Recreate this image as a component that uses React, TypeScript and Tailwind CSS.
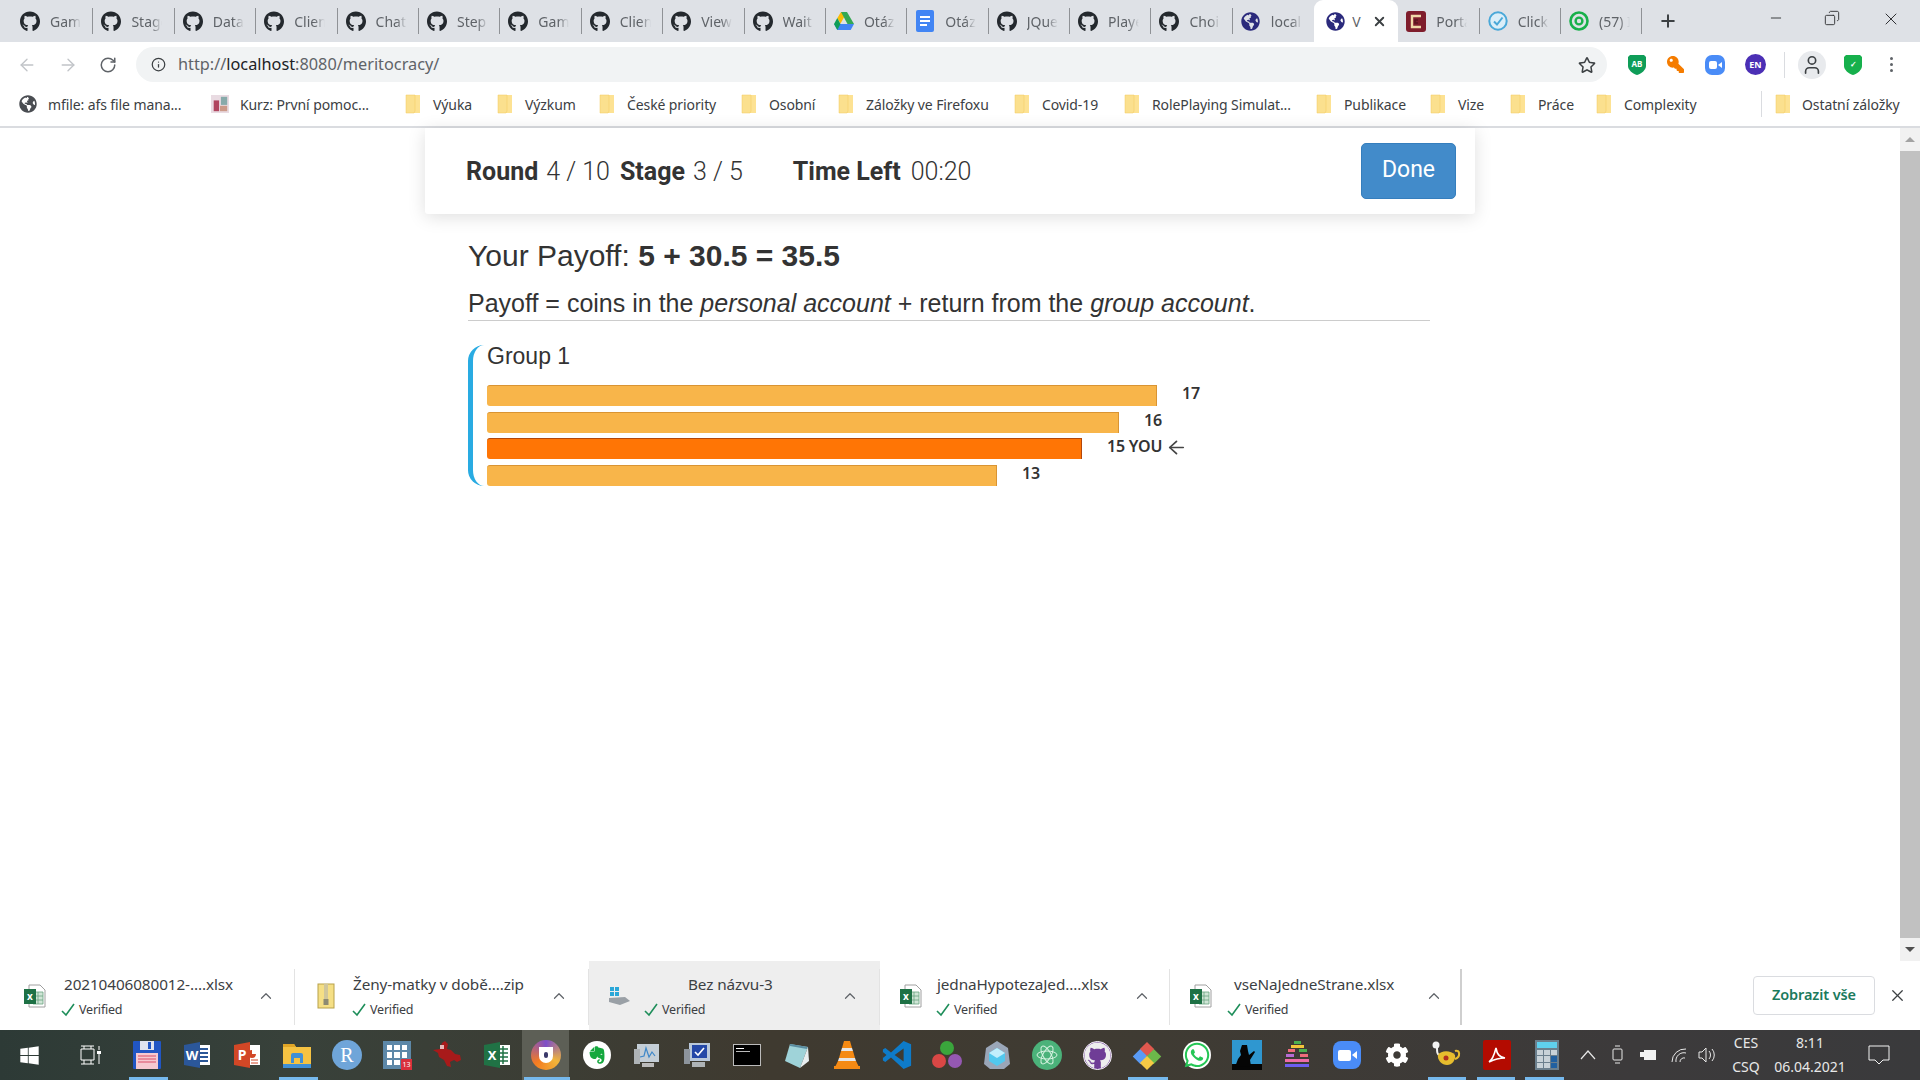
import React from "react";
import { FaGithub, FaWindows, FaEvernote, FaWhatsapp, FaCog, FaGlobeAmericas, FaRegStar, FaKey } from "react-icons/fa";
import { ArrowLeft, ArrowRight, RotateCw, Info, User, ChevronUp, Plus, Minus, X, Copy } from "lucide-react";

const Folder = () => (
  <svg width="16" height="20" viewBox="0 0 16 20" className="shrink-0">
    <path d="M1 1h9l5 0v18H1z" fill="#fde293" />
    <path d="M1 1h9v16l-1 2H1z" fill="#fbe08e" stroke="#f0c95f" strokeWidth="0.5" />
  </svg>
);

const Docs = () => (
  <svg width="18" height="22" viewBox="0 0 18 22">
    <rect x="0" y="0" width="18" height="22" rx="2" fill="#4285f4" />
    <rect x="4" y="6" width="10" height="2" fill="#fff" />
    <rect x="4" y="10" width="10" height="2" fill="#fff" />
    <rect x="4" y="14" width="7" height="2" fill="#fff" />
  </svg>
);
const Drive = () => (
  <svg width="20" height="18" viewBox="0 0 20 18">
    <polygon points="7,0 13,0 6.5,11.5 3.3,6" fill="#fbbc04" />
    <polygon points="13,0 20,12 13.5,12 7,0" fill="#34a853" />
    <polygon points="0,12 6.5,12 13.5,12 20,12 16.7,18 3.3,18" fill="#4285f4" />
    <polygon points="3.3,6 6.5,12 3.3,18 0,12" fill="#0f9d58" />
  </svg>
);
const Globe = ({ s = 19 }: { s?: number }) => <FaGlobeAmericas size={s} color="#2b2a7c" />;
const Hub = () => <FaGithub size={21} color="#24292e" />;
const Portal = () => (
  <svg width="20" height="21" viewBox="0 0 20 21">
    <rect width="20" height="21" rx="3" fill="#7f1d2c" />
    <path d="M15 5H6v11h9" fill="none" stroke="#f0d8a8" strokeWidth="2.4" />
    <path d="M12 9H9v3h3" fill="none" stroke="#5a1420" strokeWidth="1.6" />
  </svg>
);
const ClickIcon = () => (
  <svg width="20" height="20" viewBox="0 0 20 20">
    <circle cx="10" cy="10" r="8.7" fill="#dbeef8" stroke="#4aa8d8" strokeWidth="2" />
    <path d="M6 10.5l3 3 5.5-7" fill="none" stroke="#4aa8d8" strokeWidth="2" />
  </svg>
);
const Target = () => (
  <svg width="20" height="20" viewBox="0 0 20 20">
    <circle cx="10" cy="10" r="8.5" fill="none" stroke="#18b04a" strokeWidth="2.6" />
    <circle cx="10" cy="10" r="3.4" fill="none" stroke="#18b04a" strokeWidth="2.4" />
  </svg>
);

const tabs: { icon: React.ReactNode; t: string }[] = [
  { icon: <Hub />, t: "Game" }, { icon: <Hub />, t: "Stage" }, { icon: <Hub />, t: "Data" },
  { icon: <Hub />, t: "Client" }, { icon: <Hub />, t: "Chat" }, { icon: <Hub />, t: "Step" },
  { icon: <Hub />, t: "Game" }, { icon: <Hub />, t: "Client" }, { icon: <Hub />, t: "View" },
  { icon: <Hub />, t: "Wait" }, { icon: <Drive />, t: "Otáz" }, { icon: <Docs />, t: "Otáz" },
  { icon: <Hub />, t: "JQuer" }, { icon: <Hub />, t: "Player" }, { icon: <Hub />, t: "Choic" },
  { icon: <Globe />, t: "local" },
];

function Tab({ icon, t, last }: { icon: React.ReactNode; t: string; last?: boolean }) {
  return (
    <div className={"w-[81.4px] h-[26px] flex items-center pl-[8px] shrink-0 " + (last ? "" : "border-r border-[#8f9296]")}>
      <span className="w-[20px] flex justify-center shrink-0">{icon}</span>
      <span className="ml-[10px] w-[31px] overflow-hidden whitespace-nowrap text-[14px] text-[#5f6368] [mask-image:linear-gradient(90deg,#000_65%,transparent)]">{t}</span>
    </div>
  );
}

function TabBar() {
  return (
    <div className="h-[42px] bg-[#dee1e6] flex items-end pl-[12px] shrink-0">
      <div className="flex items-center h-[42px]">
        {tabs.map((x, i) => <Tab key={i} icon={x.icon} t={x.t} last={i === tabs.length - 1} />)}
      </div>
      <div className="relative w-[84px] h-[42px] bg-white rounded-t-[9px] flex items-center pl-[12px] shrink-0 text-[#3c4043]">
        <Globe />
        <span className="ml-[7px] text-[14px] text-[#5f6368] w-[14px] overflow-hidden">V</span>
        <X size={15} strokeWidth={3} className="ml-[6px]" color="#3c4043" />
      </div>
      <div className="flex items-center h-[42px]">
        <Tab icon={<Portal />} t="Portal" />
        <Tab icon={<ClickIcon />} t="Click" />
        <Tab icon={<Target />} t="(57) I" />
      </div>
      <Plus size={20} strokeWidth={2.4} color="#3c4043" className="ml-[16px] mb-[11px]" />
      <div className="ml-auto flex h-[42px] items-start pt-[10px] text-[#303134]">
        <Minus size={16} strokeWidth={1.4} className="mr-[40px]" />
        <Copy size={16} strokeWidth={1.4} className="mr-[41px] -scale-x-100" />
        <X size={20} strokeWidth={1.2} className="mr-[19px] -mt-[1px]" />
      </div>
    </div>
  );
}

const Shield = ({ c, t }: { c: string; t: string }) => (
  <svg width="20" height="22" viewBox="0 0 20 22">
    <path d="M3 1h14l2 2v9c0 4-5 8-9 9-4-1-9-5-9-9V3z" fill={c} />
    <text x="10" y="13" fontSize="8" fontWeight="700" textAnchor="middle" fill="#fff" fontFamily="'Noto Sans',sans-serif">{t}</text>
  </svg>
);

function Toolbar() {
  return (
    <div className="h-[42px] bg-white flex items-center shrink-0 pl-[17px] pt-[3px]">
      <ArrowLeft size={20} strokeWidth={1.6} color="#c1c4c8" />
      <ArrowRight size={20} strokeWidth={1.6} color="#c1c4c8" className="ml-[21px]" />
      <RotateCw size={18} strokeWidth={2} color="#5f6368" className="ml-[21px]" />
      <div className="ml-[19px] w-[1471px] h-[35px] rounded-full bg-[#f1f3f4] flex items-center pl-[15px] pr-[11px]">
        <Info size={15} strokeWidth={2} color="#3c4043" />
        <span className="ml-[12px] text-[16.3px] text-[#5f6368] font-['Noto_Sans',sans-serif]">http://<span className="text-[#202124]">localhost</span>:8080/meritocracy/</span>
        <FaRegStar size={18} color="#3c4043" className="ml-auto" />
      </div>
      <div className="flex items-center ml-[20px]">
        <Shield c="#0f9d58" t="AB" />
        <FaKey size={17} color="#f57c00" className="ml-[20px] -scale-x-100" />
        <span className="ml-[21px] w-[20px] h-[20px] rounded-[7px] bg-[#4a8cf7] flex items-center justify-center">
          <span className="w-[8px] h-[8px] rounded-[2px] bg-white" />
          <span className="ml-[1px] border-y-[3px] border-y-transparent border-r-[4px] border-r-white" />
        </span>
        <span className="ml-[20px] w-[21px] h-[21px] rounded-full bg-[#4b2fb5] text-white text-[9px] font-bold flex items-center justify-center font-['Noto_Sans',sans-serif]">EN</span>
        <span className="ml-[18px] w-px h-[26px] bg-[#dadce0]" />
        <span className="ml-[13px] w-[28px] h-[28px] rounded-full bg-[#e8eaed] flex items-center justify-center">
          <User size={22} strokeWidth={1.8} color="#3c4043" />
        </span>
        <span className="ml-[17px]"><Shield c="#16b04c" t="✓" /></span>
        <span className="ml-[27px] flex flex-col gap-[3px]">
          <span className="w-[3px] h-[3px] rounded-full bg-[#5f6368]" />
          <span className="w-[3px] h-[3px] rounded-full bg-[#5f6368]" />
          <span className="w-[3px] h-[3px] rounded-full bg-[#5f6368]" />
        </span>
      </div>
    </div>
  );
}

const marks: { w: string; icon?: React.ReactNode; t: string }[] = [
  { w: "w-[192px]", icon: <FaGlobeAmericas size={18} color="#4a4d52" />, t: "mfile: afs file mana..." },
  { w: "w-[193px]", icon: (
    <svg width="20" height="20" viewBox="0 0 20 20"><rect width="20" height="20" fill="#e9dbe2" /><rect x="3" y="6" width="6" height="12" fill="#b0455f" /><rect x="11" y="2" width="7" height="9" fill="#8aa" /><rect x="10" y="12" width="8" height="6" fill="#c98" /></svg>
  ), t: "Kurz: První pomoc..." },
  { w: "w-[92px]", icon: <Folder />, t: "Výuka" },
  { w: "w-[102px]", icon: <Folder />, t: "Výzkum" },
  { w: "w-[142px]", icon: <Folder />, t: "České priority" },
  { w: "w-[97px]", icon: <Folder />, t: "Osobní" },
  { w: "w-[176px]", icon: <Folder />, t: "Záložky ve Firefoxu" },
  { w: "w-[110px]", icon: <Folder />, t: "Covid-19" },
  { w: "w-[192px]", icon: <Folder />, t: "RolePlaying Simulat..." },
  { w: "w-[114px]", icon: <Folder />, t: "Publikace" },
  { w: "w-[80px]", icon: <Folder />, t: "Vize" },
  { w: "w-[86px]", icon: <Folder />, t: "Práce" },
  { w: "w-[166px]", icon: <Folder />, t: "Complexity" },
];

function Bookmarks() {
  return (
    <div className="h-[44px] bg-white border-b-2 border-[#dadce0] flex items-center pl-[19px] pb-[2px] shrink-0 text-[14px] text-[#3c4043] font-['Noto_Sans',sans-serif]">
      {marks.map((m, i) => (
        <div key={i} className={m.w + " flex items-center shrink-0 gap-[11px]"}>
          <span className="w-[18px] flex justify-center shrink-0">{m.icon}</span>
          <span className="whitespace-nowrap tracking-[-0.1px]">{m.t}</span>
        </div>
      ))}
      <span className="w-px h-[26px] bg-[#dadce0] shrink-0" />
      <div className="ml-[13px] flex items-center gap-[11px] shrink-0">
        <Folder />
        <span className="whitespace-nowrap tracking-[-0.1px]">Ostatní záložky</span>
      </div>
    </div>
  );
}

const Bar = ({ w, you, label }: { w: string; you?: boolean; label: string }) => (
  <div className="flex items-center h-[21px]">
    <div className={w + " h-[21px] rounded-l-[3px] border-t border-r " + (you ? "bg-[#ff7505] border-[#b3470a]" : "bg-[#f8b54a] border-[#d99433]")} />
    <span className="ml-[25px] text-[16px] font-semibold text-[#333] font-['Noto_Sans',sans-serif] leading-none -mt-[5px] whitespace-nowrap flex items-center tracking-[-0.2px]">
      {label}
      {you && <ArrowLeft size={21} strokeWidth={1.8} className="ml-[4px] mt-[2px] scale-x-110" color="#444" />}
    </span>
  </div>
);

function Page() {
  return (
    <div className="flex-1 flex min-h-0 bg-white font-['Liberation_Sans',sans-serif] text-[#333]">
      <div className="flex-1 relative">
        <div className="ml-[425px] w-[1050px] h-[86px] bg-white rounded-b-[3px] shadow-[0_3px_18px_rgba(0,0,0,0.13)] flex items-center pl-[41px] pr-[19px] pt-[2px] text-[25px] font-['Roboto',sans-serif]">
          <b className="font-bold">Round</b><span className="ml-[8px] font-light">4 / 10</span>
          <b className="ml-[10px] font-bold">Stage</b><span className="ml-[8px] font-light">3 / 5</span>
          <b className="ml-[50px] font-bold">Time Left</b><span className="ml-[10px] font-light">00:20</span>
          <button className="ml-auto w-[95px] h-[56px] bg-[#428bca] border border-[#357ebd] rounded-[5px] text-white text-[23px] -mt-[3px]">Done</button>
        </div>
        <div className="ml-[468px] w-[962px]">
          <div className="text-[30px] leading-none mt-[27px]">Your Payoff: <b>5 + 30.5 = 35.5</b></div>
          <div className="text-[25px] leading-none mt-[20px] pb-[4px] border-b border-[#ccc]">
            Payoff = coins in the <i>personal account</i> + return from the <i>group account</i>.
          </div>
          <div className="mt-[24px] border-l-[5px] border-[#29abe2] rounded-l-[16px] pl-[14px] flex flex-col">
            <div className="text-[23px] leading-none h-[40px] text-[#333]">Group 1</div>
            <div className="flex flex-col gap-[5.5px]">
              <Bar w="w-[670px]" label="17" />
              <Bar w="w-[632px]" label="16" />
              <Bar w="w-[595px]" label="15 YOU" you />
              <Bar w="w-[510px]" label="13" />
            </div>
          </div>
        </div>
      </div>
      <div className="w-[20px] bg-[#f1f1f1] flex flex-col items-center shrink-0">
        <div className="h-[23px] flex items-center justify-center"><span className="border-x-[5px] border-x-transparent border-b-[5px] border-b-[#a3a3a3]" /></div>
        <div className="flex-1 w-full bg-[#c1c1c1]" />
        <div className="h-[23px] flex items-center justify-center"><span className="border-x-[5px] border-x-transparent border-t-[5px] border-t-[#505050]" /></div>
      </div>
    </div>
  );
}

const XlsxIcon = () => (
  <svg width="22" height="24" viewBox="0 0 22 24">
    <path d="M5 1h11l5 5v17H5z" fill="#fff" stroke="#a0a0a0" />
    <path d="M9 8h10v12H9z" fill="#cfe5d6" stroke="#6aa380" strokeWidth="0.8" />
    <path d="M9 12h10M9 16h10M14 8v12" stroke="#6aa380" strokeWidth="0.8" />
    <rect x="0" y="5" width="12" height="15" fill="#1e7145" />
    <text x="6" y="16" fontSize="10" fontWeight="700" fill="#fff" textAnchor="middle" fontFamily="'Noto Sans',sans-serif">x</text>
  </svg>
);
const ZipIcon = () => (
  <svg width="18" height="26" viewBox="0 0 18 26">
    <rect x="1" y="1" width="16" height="24" fill="#f5df85" stroke="#b8a14a" />
    <rect x="7" y="1" width="4" height="18" fill="#d0c69b" />
    <rect x="6.5" y="16" width="5" height="6" fill="#8d8a72" />
  </svg>
);
const SetupIcon = () => (
  <svg width="24" height="22" viewBox="0 0 24 22">
    <rect x="3" y="2" width="4" height="4" fill="#2aa7d8" />
    <rect x="8" y="2" width="4" height="4" fill="#2aa7d8" />
    <rect x="3" y="7" width="4" height="4" fill="#2aa7d8" />
    <rect x="8" y="7" width="4" height="4" fill="#2aa7d8" />
    <path d="M2 13l16-1 5 4-10 4-11-3z" fill="#9aa0a6" />
  </svg>
);

const dls = [
  { icon: <XlsxIcon />, name: "20210406080012-....xlsx", iconW: "w-[22px] ml-[24px]", col: "ml-[18px] w-[171px]", textPad: "", row: "-ml-[3px]", chev: "ml-[22px]", w: "w-[295px]", bg: "" },
  { icon: <ZipIcon />, name: "Ženy-matky v době....zip", iconW: "w-[18px] ml-[22px]", col: "ml-[18px] w-[176px]", textPad: "", row: "-ml-[1px]", chev: "ml-[21px]", w: "w-[294px]", bg: "" },
  { icon: <SetupIcon />, name: "Bez názvu-3", iconW: "w-[24px] ml-[18px]", col: "ml-[13px] w-[180px]", textPad: "pl-[44px]", row: "", chev: "ml-[17px]", w: "w-[291px]", bg: "bg-[#eeeeee]" },
  { icon: <XlsxIcon />, name: "jednaHypotezaJed....xlsx", iconW: "w-[22px] ml-[20px]", col: "ml-[12px] w-[181px]", textPad: "pl-[3px]", row: "ml-[2px]", chev: "ml-[18px]", w: "w-[290px]", bg: "" },
  { icon: <XlsxIcon />, name: "vseNaJedneStrane.xlsx", iconW: "w-[22px] ml-[20px]", col: "ml-[14px] w-[180px]", textPad: "pl-[8px]", row: "ml-[1px]", chev: "ml-[19px]", w: "w-[292px]", bg: "" },
];

function Downloads() {
  return (
    <div className="h-[69px] bg-white flex items-center shrink-0 font-['Noto_Sans',sans-serif]">
      {dls.map((d, i) => (
        <div key={i} className={d.w + " h-full flex items-center shrink-0 " + d.bg}>
          <span className={d.iconW + " shrink-0 flex justify-center"}>{d.icon}</span>
          <div className={d.col + " flex flex-col shrink-0 pt-[1px]"}>
            <span className={"text-[15.3px] leading-[20px] text-[#3c4043] whitespace-nowrap tracking-[-0.1px] " + d.textPad}>{d.name}</span>
            <span className={"flex items-center mt-[8px] " + d.row}>
              <svg width="14" height="14" viewBox="0 0 14 14" className="mr-[4px]"><path d="M1 8l4 4 8-11" fill="none" stroke="#1e8e5a" strokeWidth="1.6" /></svg>
              <span className="text-[12.5px] leading-[16px] text-[#3c4043] tracking-[-0.2px]">Verified</span>
            </span>
          </div>
          <ChevronUp size={18} strokeWidth={1.6} color="#5f6368" className={d.chev + " shrink-0"} />
          <span className={"ml-auto h-[56px] mt-[3px] shrink-0 " + (i === 4 ? "bg-[#cfcfcf] w-[2px]" : "bg-[#e3e3e3] w-px")} />
        </div>
      ))}
      <div className="ml-auto flex items-center">
        <button className="w-[122px] h-[39px] rounded-[4px] border border-[#dadce0] text-[14.5px] font-semibold text-[#1b7a5c] bg-white tracking-[-0.1px] -mt-[1px]">Zobrazit vše</button>
        <X size={19} strokeWidth={1.6} color="#3c4043" className="ml-[13px] mr-[13px]" />
      </div>
    </div>
  );
}

const I = ({ children }: { children: React.ReactNode }) => (
  <div className="w-[50px] h-[50px] flex items-center justify-center shrink-0">{children}</div>
);

const Under = ({ w }: { w: string }) => <span className={"absolute bottom-0 h-[3px] bg-[#76b9ed] " + w} />;

function Taskbar() {
  return (
    <div className="relative h-[50px] bg-[linear-gradient(90deg,#2d3a36_0%,#38413a_15%,#3f3a30_40%,#3f3b33_60%,#3c3a3b_85%,#3a3a3c_100%)] flex items-center shrink-0 text-white font-['Noto_Sans',sans-serif]">
      <div className="w-[58px] flex justify-center"><FaWindows size={21} color="#fff" /></div>
      <div className="w-[64px] flex justify-center">
        <svg width="21" height="20" viewBox="0 0 21 20" fill="none" stroke="#fff" strokeWidth="1"><path d="M1 1h13M1 19h13M1 4h13v11H1zM4 15v4M11 15v4M4 1v3M11 1v3M19 1v4M19 9v10" /><rect x="17" y="6" width="4" height="3" fill="#fff" stroke="none" /></svg>
      </div>
      <I><svg width="28" height="28" viewBox="0 0 28 28"><rect width="28" height="28" rx="1" fill="#2156c4" /><rect x="7" y="0" width="14" height="9" fill="#dfe3ee" /><rect x="15" y="1" width="3" height="7" fill="#2156c4" /><rect x="3" y="12" width="22" height="16" fill="#f6c9d0" /><path d="M5 15h18M5 18h18M5 21h18" stroke="#d94c66" /></svg></I>
      <I><svg width="28" height="28" viewBox="0 0 28 28"><rect x="14" y="4" width="13" height="20" fill="#fff" /><path d="M16 8h9M16 12h9M16 16h9M16 20h9" stroke="#2b5797" strokeWidth="2" /><path d="M1 4l16-3v26L1 24z" fill="#2b579a" /><text x="9" y="19" fontSize="13" fontWeight="700" fill="#fff" textAnchor="middle">W</text></svg></I>
      <I><svg width="28" height="28" viewBox="0 0 28 28"><rect x="14" y="4" width="13" height="20" fill="#fff" /><path d="M19 9a4 4 0 1 0 4 4h-4z" fill="#d24726" /><path d="M18 19h7M18 22h7" stroke="#d24726" /><path d="M1 4l16-3v26L1 24z" fill="#d24726" /><text x="9" y="19" fontSize="14" fontWeight="700" fill="#fff" textAnchor="middle">P</text></svg></I>
      <I><svg width="28" height="26" viewBox="0 0 28 26"><path d="M0 2h11l2 3h15v21H0z" fill="#f5c242" /><path d="M0 2h11l2 3H0z" fill="#e0a526" /><path d="M8 21v-8a2 2 0 0 1 2-2h8a2 2 0 0 1 2 2v8h-3v-5h-6v5z" fill="#3f8fd6" /><rect x="0" y="22" width="28" height="4" fill="#3f8fd6" /></svg></I>
      <I><span className="w-[30px] h-[30px] rounded-full bg-[#6fa5d9] flex items-center justify-center text-[20px] font-['Liberation_Serif',serif] text-white">R</span></I>
      <I><span className="relative w-[28px] h-[28px] bg-[#5d88a8] grid grid-cols-3 gap-[2px] p-[4px]">
        {Array.from({ length: 9 }).map((_, i) => <span key={i} className="bg-white" />)}
        <span className="absolute -right-[1px] -bottom-[1px] w-[11px] h-[11px] bg-[#d9303c] text-[7px] leading-[11px] text-center">13</span>
      </span></I>
      <I><svg width="30" height="28" viewBox="0 0 30 28"><path d="M1 9l7-1 2-6 3-2 3 3-1 5 4 1 4 4 5 1 1 5-4 2-3-2-4 2 1 5-4-1-3-6-5-3-1-4z" fill="#a81a1a" /><rect x="8" y="4" width="4" height="4" fill="#e8b8b8" /></svg></I>
      <I><svg width="28" height="28" viewBox="0 0 28 28"><rect x="14" y="4" width="13" height="20" fill="#fff" /><path d="M16 8h9M16 12h9M16 16h9M16 20h9M20 5v18" stroke="#207245" strokeWidth="1.5" /><path d="M1 4l16-3v26L1 24z" fill="#207245" /><text x="9" y="19" fontSize="13" fontWeight="700" fill="#fff" textAnchor="middle">X</text></svg></I>
      <div className="w-[47px] h-[50px] bg-[#5d5f56] flex items-center justify-center shrink-0 relative">
        <span className="w-[30px] h-[30px] rounded-full bg-[conic-gradient(#7d4ec9_0deg,#f1b53a_120deg,#f47c20_230deg,#7d4ec9_360deg)] flex items-center justify-center">
          <span className="w-[14px] h-[16px] rounded-b-[7px] bg-white flex items-center justify-center"><span className="w-[4px] h-[6px] bg-[#3b3a6b] rounded-[2px]" /></span>
        </span>
      </div>
      <div className="w-[3px]" />
      <I><span className="w-[28px] h-[28px] rounded-full bg-white flex items-center justify-center"><FaEvernote size={20} color="#15a83e" /></span></I>
      <I><svg width="28" height="28" viewBox="0 0 28 28"><rect x="4" y="3" width="22" height="18" fill="#c4ced6" /><path d="M7 16l4-1 2-8 3 9 3-5 3 4" fill="none" stroke="#3d87c9" strokeWidth="1.2" /><path d="M1 8h6v15H1z" fill="#aeb3b6" /><rect x="9" y="22" width="12" height="4" fill="#bbb" /></svg></I>
      <I><svg width="28" height="28" viewBox="0 0 28 28"><rect x="6" y="2" width="21" height="18" fill="#b9c8da" /><rect x="9" y="4" width="15" height="13" fill="#2448a8" /><path d="M12 11l3 3 6-7" stroke="#fff" strokeWidth="1.6" fill="none" /><path d="M1 8h6v15H1z" fill="#8d949c" /><rect x="9" y="21" width="13" height="5" fill="#aeb3b6" /></svg></I>
      <I><span className="w-[28px] h-[22px] bg-black border border-[#bbb] relative"><span className="absolute left-[2px] top-[3px] w-[8px] h-[1px] bg-white" /><span className="absolute left-[2px] top-[6px] w-[14px] h-[1px] bg-[#bbb]" /></span></I>
      <I><svg width="26" height="28" viewBox="0 0 26 28"><path d="M6 3l18 3-8 21-15-7z" fill="#9fd3d9" /><path d="M6 3l18 3-1 2L6 5z" fill="#5a8ca0" /><path d="M16 27l8-21 1 14z" fill="#e8eef0" /></svg></I>
      <I><svg width="28" height="30" viewBox="0 0 28 30"><path d="M11 1h6l2 7H9zM8 11h12l2 7H6zM5 21h18l3 6H2z" fill="#f58a14" /><path d="M9 8h10l1 3H8zM6 18h16l1 3H5z" fill="#e6e6e6" /><rect x="1" y="26" width="26" height="3" fill="#f58a14" /></svg></I>
      <I><svg width="30" height="30" viewBox="0 0 100 100"><path d="M72 3L30 42 11 27 3 32v36l8 5 19-15 42 39 25-11V14z" fill="#0e7bc9" /><path d="M72 28L42 50l30 22z" fill="#3e3b33" /><path d="M3 40l12 10-12 10z" fill="#3e3b33" /></svg></I>
      <I><svg width="32" height="30" viewBox="0 0 32 30"><circle cx="16" cy="8" r="7" fill="#3aa53c" /><circle cx="8" cy="21" r="7" fill="#d94745" /><circle cx="24" cy="21" r="7" fill="#9558b2" /></svg></I>
      <I><svg width="26" height="30" viewBox="0 0 26 30"><path d="M13 1l11 7 2 16-6 5H6L0 24 2 8z" fill="#9aa6b8" /><path d="M13 8l8 5v8l-8 5-8-5v-8z" fill="#52c8ee" /><path d="M13 8l8 5-8 5-8-5z" fill="#c2eefc" /></svg></I>
      <I><span className="w-[30px] h-[30px] rounded-full bg-[#4bb27a] flex items-center justify-center"><svg width="22" height="22" viewBox="0 0 22 22" fill="none" stroke="#d8f3e2" strokeWidth="1"><ellipse cx="11" cy="11" rx="10" ry="4" /><ellipse cx="11" cy="11" rx="10" ry="4" transform="rotate(60 11 11)" /><ellipse cx="11" cy="11" rx="10" ry="4" transform="rotate(120 11 11)" /></svg></span></I>
      <I><span className="w-[29px] h-[29px] rounded-full bg-[#6f3d96] border border-white flex items-center justify-center"><FaGithub size={27} color="#eee" /></span></I>
      <I><svg width="32" height="32" viewBox="0 0 32 32"><rect x="4" y="12" width="11" height="11" transform="rotate(-45 9.5 17.5)" fill="#5a9bf5" /><rect x="17" y="12" width="11" height="11" transform="rotate(45 22.5 17.5)" fill="#6cb84a" /><rect x="11" y="5" width="10" height="10" transform="rotate(45 16 10)" fill="#e0584e" /><rect x="11" y="19" width="10" height="10" transform="rotate(45 16 24)" fill="#f6ca45" /></svg></I>
      <I><span className="w-[28px] h-[28px] rounded-full bg-white flex items-center justify-center"><FaWhatsapp size={28} color="#25c655" /></span></I>
      <I><svg width="30" height="30" viewBox="0 0 30 30"><rect width="30" height="30" fill="#2f97d0" /><rect y="24" width="30" height="6" fill="#050505" /><path d="M3 27l3-8 3-4-1-4 2-6 5 0 1 6 1 4 5-4 1 1-5 8 1 6z" fill="#050505" /></svg></I>
      <I><svg width="26" height="30" viewBox="0 0 26 30"><rect x="10" y="1" width="7" height="3" fill="#4caf50" /><rect x="7" y="5" width="13" height="3" fill="#f3c53b" /><rect x="4" y="9" width="7" height="3" fill="#ef6c7d" /><rect x="15" y="9" width="8" height="3" fill="#4caf50" /><rect x="2" y="14" width="8" height="3" fill="#b66bd4" /><rect x="16" y="14" width="8" height="3" fill="#ef6c7d" /><rect x="1" y="19" width="24" height="3" fill="#ef6ca8" /><rect x="1" y="24" width="24" height="3" fill="#6d5ef0" /></svg></I>
      <I><span className="w-[28px] h-[28px] rounded-[8px] bg-[#4a8cf7] flex items-center justify-center"><span className="w-[13px] h-[11px] rounded-[2px] bg-white" /><span className="ml-[1px] border-y-[4px] border-y-transparent border-r-[5px] border-r-white" /></span></I>
      <I><FaCog size={24} color="#fff" /></I>
      <I><svg width="30" height="30" viewBox="0 0 30 30"><circle cx="4" cy="5" r="3.5" fill="#f2f2f2" /><path d="M5 8c0 4 0 6 3 8" stroke="#f2f2f2" strokeWidth="2" fill="none" /><path d="M6 15c3-5 13-5 17 0 1 5-3 10-8 10S5 20 6 15z" fill="#e6bd2e" /><path d="M23 11c5-2 6 6 0 8" stroke="#e6bd2e" strokeWidth="2" fill="none" /><circle cx="14" cy="18" r="2.5" fill="#b03020" /></svg></I>
      <I><span className="w-[28px] h-[30px] rounded-[2px] bg-[#b30b00] flex items-center justify-center"><svg width="20" height="20" viewBox="0 0 20 20" fill="none" stroke="#fff" strokeWidth="1.6"><path d="M2 17c3-2 5-6 7-14 1 6 3 9 9 10-5 0-10 1-16 4z" /></svg></span></I>
      <I><span className="w-[24px] h-[30px] bg-[#6b7f8d] flex flex-col p-[2px] gap-[2px]"><span className="h-[6px] bg-[#5fd0ee]" /><span className="flex-1 grid grid-cols-3 gap-[1px]">{Array.from({ length: 9 }).map((_, i) => <span key={i} className={i === 5 || i === 8 ? "bg-[#2060a0]" : "bg-[#c8d2d8]"} />)}</span></span></I>

      <div className="ml-[8px] flex items-center text-[#e8e8e8]">
        <svg width="16" height="10" viewBox="0 0 16 10" fill="none" stroke="#e8e8e8" strokeWidth="1.2"><path d="M1 9l7-8 7 8" /></svg>
        <svg width="14" height="20" viewBox="0 0 14 20" fill="none" stroke="#e8e8e8" className="ml-[15px]"><rect x="2" y="4" width="9" height="11" rx="1" /><path d="M4 1h5M4 18h5" /></svg>
        <svg width="18" height="14" viewBox="0 0 18 14" className="ml-[15px]"><rect x="4" y="2" width="12" height="10" fill="#f2f2f2" /><rect x="0" y="4" width="4" height="5" fill="#f2f2f2" /></svg>
        <svg width="18" height="16" viewBox="0 0 18 16" fill="none" stroke="#e8e8e8" className="ml-[12px]"><path d="M2 15a13 13 0 0 1 14-13M6 15a8 8 0 0 1 10-9M10 15a4 4 0 0 1 5-4" /></svg>
        <svg width="18" height="16" viewBox="0 0 18 16" fill="none" stroke="#e8e8e8" className="ml-[10px]"><path d="M1 5h3l4-4v14l-4-4H1zM11 4a6 6 0 0 1 0 8M14 2a9 9 0 0 1 0 12" /></svg>
        <div className="ml-[13px] flex flex-col items-center text-[14px] leading-[24px] w-[34px]"><span>CES</span><span>CSQ</span></div>
        <div className="ml-[11px] flex flex-col items-center text-[14px] leading-[24px] w-[72px]"><span>8:11</span><span>06.04.2021</span></div>
      </div>
      <svg width="22" height="20" viewBox="0 0 22 20" fill="none" stroke="#f2f2f2" className="ml-[22px]"><path d="M1 1h20v14h-6l-4 4-4-4H1z" /></svg>

      <Under w="left-[129px] w-[39px]" />
      <Under w="left-[279px] w-[39px]" />
      <Under w="left-[524px] w-[46px]" />
      <Under w="left-[1128px] w-[40px]" />
      <Under w="left-[1428px] w-[38px]" />
      <Under w="left-[1477px] w-[38px]" />
      <Under w="left-[1525px] w-[39px]" />
    </div>
  );
}

export default function App() {
  return (
    <div className="w-[1920px] h-[1080px] flex flex-col overflow-hidden font-['Noto_Sans',sans-serif]">
      <TabBar />
      <Toolbar />
      <Bookmarks />
      <Page />
      <Downloads />
      <Taskbar />
    </div>
  );
}
